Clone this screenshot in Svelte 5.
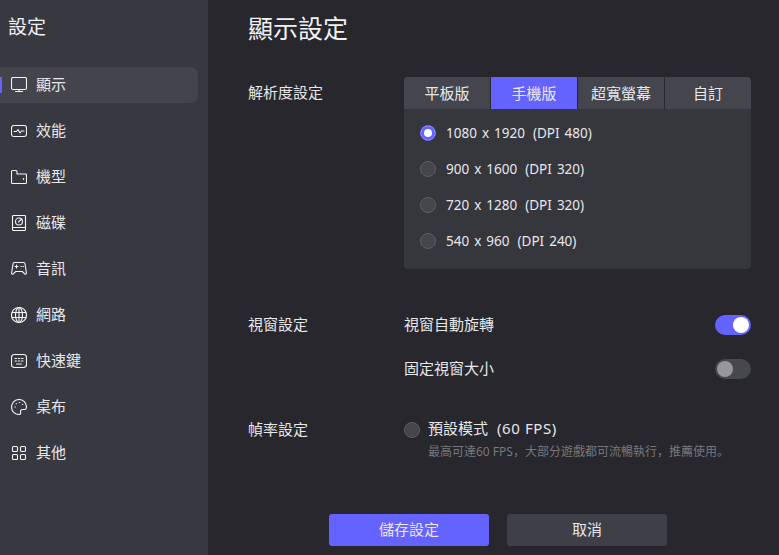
<script>
  const navItems = [
    { label: "顯示", icon: "display", active: true },
    { label: "效能", icon: "pulse" },
    { label: "機型", icon: "folder" },
    { label: "磁碟", icon: "disk" },
    { label: "音訊", icon: "gamepad" },
    { label: "網路", icon: "globe" },
    { label: "快速鍵", icon: "keyboard" },
    { label: "桌布", icon: "palette" },
    { label: "其他", icon: "grid" }
  ];

  const tabs = ["平板版", "手機版", "超寬螢幕", "自訂"];
  let activeTab = 1;

  const resolutions = [
    { size: "1080 x 1920", dpi: "(DPI 480)" },
    { size: "900 x 1600", dpi: "(DPI 320)" },
    { size: "720 x 1280", dpi: "(DPI 320)" },
    { size: "540 x 960", dpi: "(DPI 240)" }
  ];
  let selected = 0;

  let autoRotate = true;
  let fixedSize = false;
</script>

<div class="app">
  <aside class="sidebar">
    <h2>設定</h2>
    <nav>
      {#each navItems as item}
        <div class="nav-item" class:active={item.active}>
          <svg viewBox="0 0 16 16" aria-hidden="true">
            {#if item.icon === "display"}
              <rect x="0.5" y="0.5" width="15" height="12" rx="1.5" />
              <path d="M4.500 14.500h7M8 12.500v2" />
            {:else if item.icon === "pulse"}
              <rect x="0.5" y="2.5" width="15" height="11" rx="2.500" />
              <path d="M3 8.500h2.500l1.500-2 2 3.500 1.500-2H13" />
            {:else if item.icon === "folder"}
              <path d="M1.500 14.500a1 1 0 0 1-1-1v-11a1 1 0 0 1 1-1h3.500a1 1 0 0 1 1 1v2.500h8.500a1 1 0 0 1 1 1v7.500a1 1 0 0 1-1 1z" />
              <path d="M12.500 9.500v1" />
            {:else if item.icon === "disk"}
              <rect x="1.500" y="0.500" width="13" height="15" rx="1" />
              <path d="M1.500 12.500h13" />
              <circle cx="8" cy="6.500" r="3.500" />
              <path d="M7.500 7l3-3" />
            {:else if item.icon === "gamepad"}
              <path d="M3.500 1.500h9a1.500 1.500 0 0 1 1.500 1.300l1.400 9.200a1 1 0 0 1-1.700.9l-2.400-2.400h-6.600l-2.400 2.400a1 1 0 0 1-1.700-.9l1.400-9.200a1.500 1.500 0 0 1 1.500-1.300z" />
              <path d="M4 5.500h3M5.500 4v3M10 5.500h.5M12 5.500h.5" />
            {:else if item.icon === "globe"}
              <circle cx="8" cy="8" r="7.500" />
              <ellipse cx="8" cy="8" rx="3.500" ry="7.500" />
              <path d="M1 5.500h14M1 10.500h14M8 .5v15" />
            {:else if item.icon === "keyboard"}
              <rect x="0.500" y="1.500" width="15" height="13" rx="3" />
              <path d="M4 5.500h1.500M7.300 5.500h1.500M10.500 5.500H12M4 8h1.500M7.300 8h1.500M10.500 8H12M5.500 11h5" />
            {:else if item.icon === "palette"}
              <path d="M8 .5a7.500 7.500 0 0 0 0 15c1.500 0 2-1 1.600-2.200-.5-1.500.3-2.800 2-2.800h2.200c1.100 0 1.700-.8 1.700-2.500A7.500 7.500 0 0 0 8 .5z" />
              <path d="M3.800 8h.5M5 4.800h.5M8.300 3.500h.5M11.300 5.300h.5" />
            {:else}
              <rect x="1.500" y="1.500" width="5" height="5" rx="1" />
              <rect x="9.500" y="1.500" width="5" height="5" rx="1" />
              <rect x="1.500" y="9.500" width="5" height="5" rx="1" />
              <rect x="9.500" y="9.500" width="5" height="5" rx="1" />
            {/if}
          </svg>
          <span>{item.label}</span>
        </div>
      {/each}
    </nav>
  </aside>

  <main class="content">
    <h1>顯示設定</h1>

    <section class="row resolution">
      <div class="label">解析度設定</div>
      <div class="panel">
        <div class="tabs">
          {#each tabs as tab, i}
            <button type="button" class:active={i === activeTab} on:click={() => (activeTab = i)}>{tab}</button>
          {/each}
        </div>
        <div class="options">
          {#each resolutions as res, i}
            <button type="button" class="option" on:click={() => (selected = i)}>
              <span class="radio" class:checked={i === selected}></span>
              <span class="res-text">{res.size}<span class="dpi">{res.dpi}</span></span>
            </button>
          {/each}
        </div>
      </div>
    </section>

    <section class="row windows">
      <div class="label">視窗設定</div>
      <div class="switches">
        <div class="switch-row">
          <span class="switch-label">視窗自動旋轉</span>
          <button type="button" class="switch" class:on={autoRotate} aria-label="視窗自動旋轉" on:click={() => (autoRotate = !autoRotate)}><i></i></button>
        </div>
        <div class="switch-row">
          <span class="switch-label">固定視窗大小</span>
          <button type="button" class="switch" class:on={fixedSize} aria-label="固定視窗大小" on:click={() => (fixedSize = !fixedSize)}><i></i></button>
        </div>
      </div>
    </section>

    <section class="row framerate">
      <div class="label">幀率設定</div>
      <div class="fps">
        <span class="radio"></span>
        <div>
          <div class="fps-title">預設模式<span class="fps-note">(60 FPS)</span></div>
          <div class="fps-hint">最高可達60 FPS，大部分遊戲都可流暢執行，推薦使用。</div>
        </div>
      </div>
    </section>

    <div class="actions">
      <button type="button" class="primary">儲存設定</button>
      <button type="button" class="secondary">取消</button>
    </div>
  </main>
</div>

<style>
  :global(body) {
    background: #27272d;
  }

  .app {
    display: flex;
    width: 779px;
    height: 555px;
    overflow: hidden;
    color: #e8e8ea;
    font-family: "Noto Sans", "Noto Sans CJK SC", sans-serif;
    font-size: 15px;
  }

  button {
    font: inherit;
    color: inherit;
    border: 0;
    padding: 0;
    background: none;
  }

  .sidebar {
    width: 208px;
    flex: 0 0 auto;
    background: #383840;
  }

  .sidebar h2 {
    margin: 0;
    padding: 14px 0 0 8px;
    height: 53px;
    box-sizing: border-box;
    font-size: 19px;
    line-height: 26px;
    font-weight: 400;
    color: #f0f0f2;
  }

  nav {
    display: flex;
    flex-direction: column;
    gap: 10px;
    padding-top: 14px;
    width: 198px;
  }

  .nav-item {
    position: relative;
    display: flex;
    align-items: center;
    gap: 9px;
    height: 36px;
    padding-left: 11px;
    border-radius: 0 8px 8px 0;
  }

  .nav-item span {
    padding-bottom: 4px;
  }

  .nav-item svg {
    width: 16px;
    height: 16px;
    flex: 0 0 auto;
    fill: none;
    stroke: #f4f4f5;
    stroke-width: 1.1;
    stroke-linecap: round;
    stroke-linejoin: round;
  }

  .nav-item.active {
    background: #44444d;
  }

  .nav-item.active::before {
    content: "";
    position: absolute;
    left: 0;
    top: 10px;
    width: 2px;
    height: 16px;
    background: #6563ff;
  }

  .content {
    flex: 1;
    padding: 0 28px 0 40px;
    min-width: 0;
  }

  h1 {
    margin: 0;
    padding-top: 11px;
    height: 77px;
    box-sizing: border-box;
    font-size: 25px;
    line-height: 34px;
    font-weight: 400;
    color: #f2f2f4;
  }

  .row {
    display: flex;
  }

  .label {
    width: 156px;
    flex: 0 0 auto;
    line-height: 20px;
  }

  .resolution .label {
    padding-top: 5px;
  }

  .panel {
    flex: 1;
    height: 192px;
    border-radius: 4px;
    background: #36363d;
    overflow: hidden;
  }

  .tabs {
    display: flex;
    gap: 1px;
    height: 32px;
    background: #27272d;
  }

  .tabs button {
    flex: 1;
    padding-bottom: 2px;
    background: #45454d;
  }

  .tabs button.active {
    background: #6563ff;
  }

  .options {
    display: flex;
    flex-direction: column;
    padding-top: 6px;
  }

  .option {
    display: flex;
    align-items: center;
    gap: 10px;
    height: 36px;
    padding-left: 16px;
    text-align: left;
    font-size: 13.5px;
    word-spacing: 1.5px;
  }

  .dpi {
    margin-left: 8px;
  }

  .radio {
    width: 14px;
    height: 14px;
    flex: 0 0 auto;
    border-radius: 50%;
    border: 1px solid #5d5d64;
    background: #45454c;
    display: block;
  }

  .radio.checked {
    border-color: #6563ff;
    background: #fff;
    box-shadow: inset 0 0 0 3px #6563ff;
  }

  .windows {
    margin-top: 38px;
  }

  .windows .label {
    padding-top: 7px;
  }

  .switches {
    flex: 1;
    display: flex;
    flex-direction: column;
    gap: 8px;
  }

  .switch-row {
    display: flex;
    align-items: center;
    justify-content: space-between;
    height: 36px;
  }

  .switch-label {
    padding-bottom: 4px;
  }

  .switch {
    position: relative;
    width: 36px;
    height: 20px;
    border-radius: 10px;
    background: #47474e;
  }

  .switch i {
    position: absolute;
    left: 2px;
    top: 2px;
    width: 16px;
    height: 16px;
    border-radius: 50%;
    background: #97979b;
  }

  .switch.on {
    background: #6563ff;
  }

  .switch.on i {
    left: 18px;
    background: #fff;
  }

  .framerate {
    margin-top: 32px;
  }

  .fps {
    display: flex;
    gap: 8px;
  }

  .fps .radio {
    margin-top: 3px;
  }

  .fps-title {
    line-height: 18px;
  }

  .fps-note {
    margin-left: 9px;
    letter-spacing: 0.6px;
  }

  .fps-hint {
    font-size: 12px;
    line-height: 16px;
    margin-top: 7px;
    color: #77777c;
  }

  .actions {
    display: flex;
    gap: 18px;
    margin: 54px 0 0 81px;
  }

  .actions button {
    width: 160px;
    height: 32px;
    padding-bottom: 3px;
    border-radius: 3px;
  }

  .primary {
    background: #6563ff;
  }

  .secondary {
    background: #3f3f48;
  }
</style>
